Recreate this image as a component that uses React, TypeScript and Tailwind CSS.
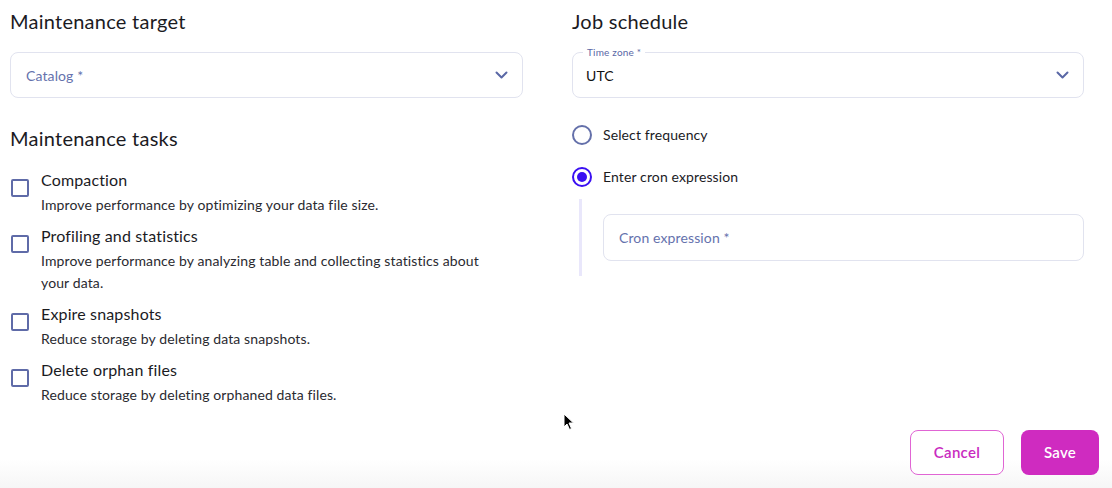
import React from "react";

const Chevron = () => (
  <svg width="13" height="8" viewBox="0 0 13 8" fill="none">
    <path d="M1.5 1.5 L6.5 6.5 L11.5 1.5" stroke="#5a68a6" strokeWidth="2" strokeLinecap="round" strokeLinejoin="round" />
  </svg>
);

const Task = ({ title, desc }: { title: string; desc: string }) => (
  <div className="flex items-start">
    <div className="mt-[11px] ml-[1px] h-[18px] w-[18px] shrink-0 rounded-[2px] border-2 border-[#5f6ba8]" />
    <div className="ml-[12px] flex flex-col">
      <div className="text-[16px] leading-[24px] tracking-[0.15px] text-[#1b1b1f]">{title}</div>
      <div className="mt-[2px] max-w-[450px] text-[14px] leading-[22px] tracking-[0.12px] text-[#2a2a30]">{desc}</div>
    </div>
  </div>
);

export default function App() {
  return (
    <div
      className="relative h-[488px] w-full overflow-hidden bg-white bg-gradient-to-b from-white from-[94%] to-[#f6f6f6]"
      style={{ fontFamily: "Lato, 'Noto Sans', sans-serif" }}
    >
      <div className="flex gap-[49px] pl-[10px] pr-[28px]">
        <div className="flex w-[513px] flex-col">
          <h2 className="mt-[8px] text-[20px] leading-[26px] tracking-[0.25px] text-[#1b1b1f]">Maintenance target</h2>
          <div className="mt-[18px] flex h-[46px] items-center justify-between rounded-[8px] border border-[#e1e3ef] pl-[15px] pr-[14px]">
            <span className="text-[14px] tracking-[0.12px] text-[#6572ad]">Catalog *</span>
            <Chevron />
          </div>
          <h2 className="mt-[27px] text-[20px] leading-[26px] tracking-[0.25px] text-[#1b1b1f]">Maintenance tasks</h2>
          <div className="mt-[17px] flex flex-col gap-[8px]">
            <Task title="Compaction" desc="Improve performance by optimizing your data file size." />
            <Task
              title="Profiling and statistics"
              desc="Improve performance by analyzing table and collecting statistics about your data."
            />
            <Task title="Expire snapshots" desc="Reduce storage by deleting data snapshots." />
            <Task title="Delete orphan files" desc="Reduce storage by deleting orphaned data files." />
          </div>
        </div>
        <div className="flex w-[512px] flex-col">
          <h2 className="mt-[8px] text-[20px] leading-[26px] tracking-[0.25px] text-[#1b1b1f]">Job schedule</h2>
          <div className="relative mt-[18px] flex h-[46px] items-center justify-between rounded-[8px] border border-[#e1e3ef] pl-[13px] pr-[14px]">
            <span className="absolute left-[10px] top-[-7px] bg-white px-[4px] text-[10px] leading-[12px] tracking-[0.2px] text-[#5a68a6]">Time zone *</span>
            <span className="text-[14px] tracking-[0.12px] text-[#111]">UTC</span>
            <Chevron />
          </div>
          <div className="mt-[26px] flex items-center gap-[11px]">
            <div className="h-[20px] w-[20px] rounded-full border-2 border-[#6470aa]" />
            <span className="text-[14px] tracking-[0.12px] text-[#1b1b1f]">Select frequency</span>
          </div>
          <div className="mt-[21px] flex items-center gap-[11px]">
            <div className="flex h-[20px] w-[20px] items-center justify-center rounded-full border-2 border-[#3a0ff2]">
              <div className="h-[10px] w-[10px] rounded-full bg-[#3a0ff2]" />
            </div>
            <span className="text-[14px] tracking-[0.12px] text-[#1b1b1f]">Enter cron expression</span>
          </div>
          <div className="mt-[12px] flex">
            <div className="ml-[7px] w-[3px] bg-[#e9e7fb]" />
            <div className="flex-1 py-[15px] pl-[21px]">
              <div className="flex h-[47px] items-center rounded-[8px] border border-[#e1e3ef] pl-[15px]">
                <span className="text-[14px] tracking-[0.12px] text-[#6572ad]">Cron expression *</span>
              </div>
            </div>
          </div>
        </div>
      </div>
      <div className="absolute bottom-[13px] right-[13px] flex gap-[17px]">
        <button className="h-[45px] w-[94px] rounded-[8px] border border-[#e065d4] bg-white text-[15px] font-semibold tracking-[0.3px] text-[#c92bc0]">
          Cancel
        </button>
        <button className="h-[45px] w-[78px] rounded-[8px] bg-[#cf2bc0] text-[15px] font-semibold tracking-[0.3px] text-white">
          Save
        </button>
      </div>
      <svg className="absolute left-[563px] top-[413px]" width="12" height="18" viewBox="0 0 12 18">
        <path d="M1 1 L1 14 L4 11 L6.5 16.5 L8.5 15.5 L6 10 L10.5 10 Z" fill="#000" stroke="#fff" strokeWidth="1" />
      </svg>
    </div>
  );
}
